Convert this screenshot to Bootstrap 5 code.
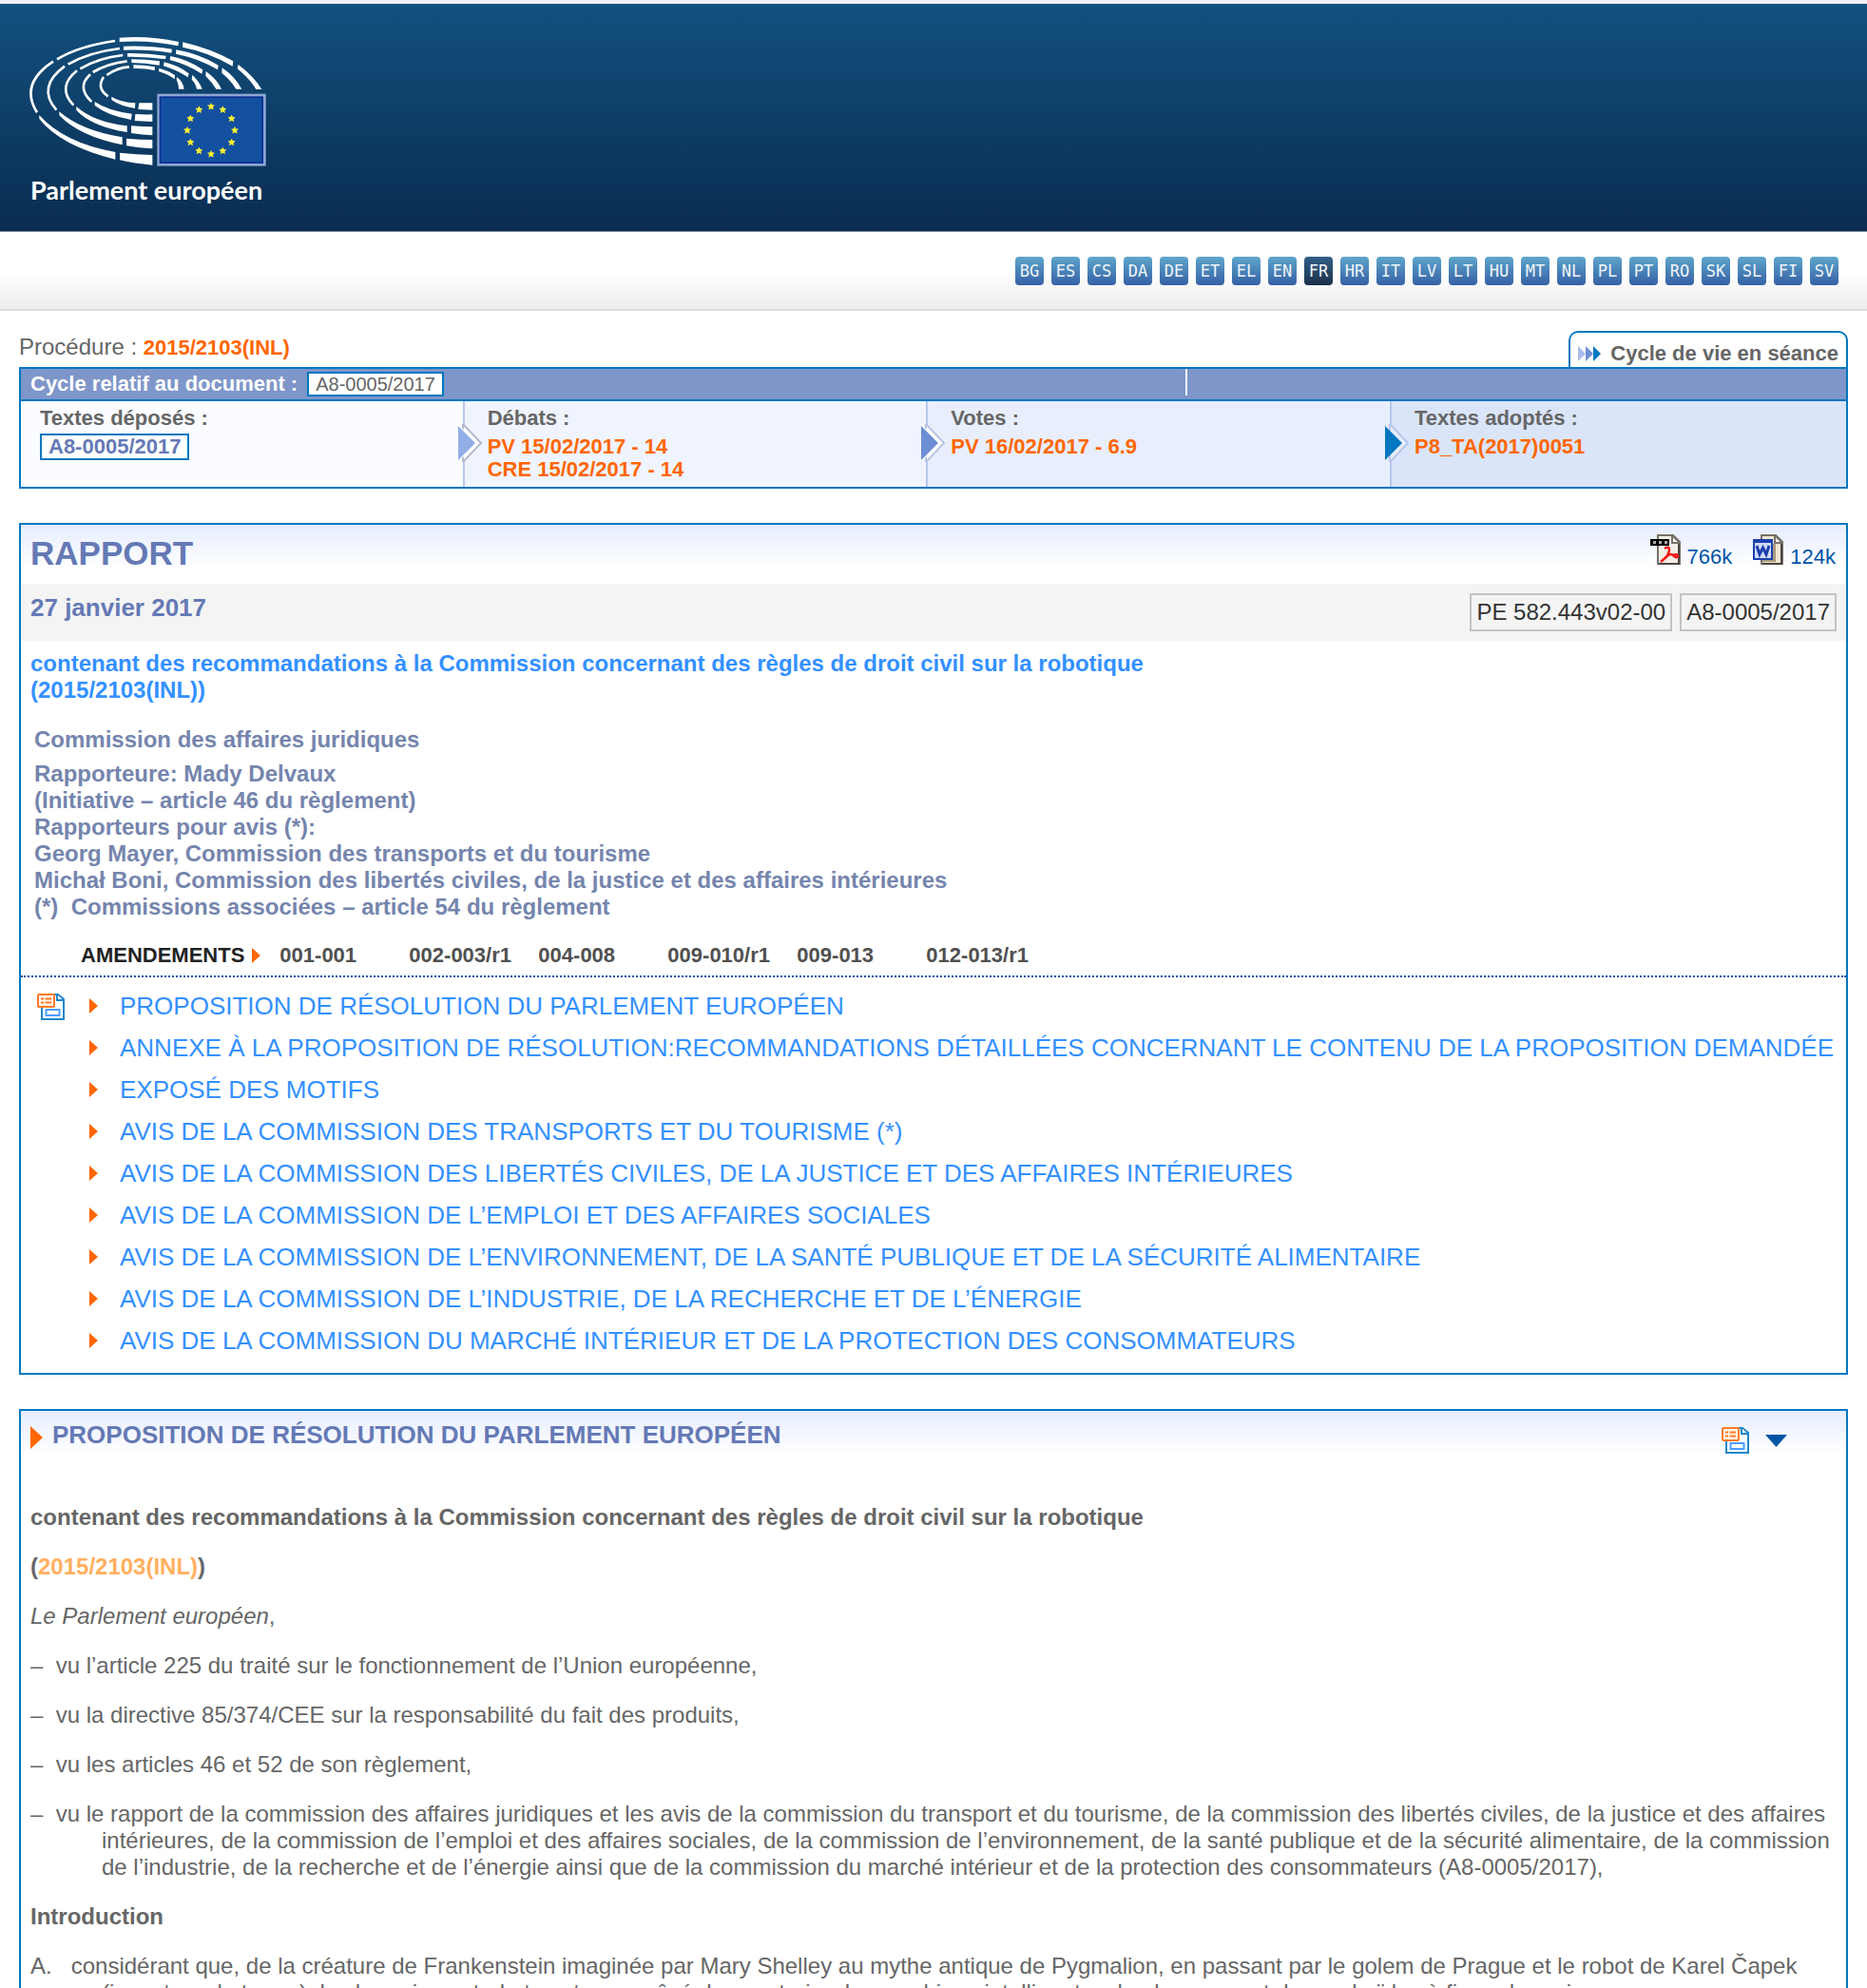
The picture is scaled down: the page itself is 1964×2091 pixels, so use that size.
<!DOCTYPE html>
<html lang="fr">
<head>
<meta charset="utf-8">
<meta name="viewport" content="width=device-width, initial-scale=1">
<title>RAPPORT contenant des recommandations à la Commission concernant des règles de droit civil sur la robotique</title>
<link href="https://cdn.jsdelivr.net/npm/bootstrap@5.3.0/dist/css/bootstrap.min.css" rel="stylesheet">
<style>
  :root { --ep-line: #0077c0; --ep-violet: #6579b5; --ep-orange: #ff6600; --ep-sky: #3390ff; }
  body { font: 24px/28px "Liberation Sans", Arial, sans-serif; color: #666; background: #fff; }
  a { text-decoration: none; color: inherit; }
  svg { display: block; flex: none; }
  .ep-top { background: linear-gradient(#13517f, #0e406a 45%, #0a2c50); border-top: 4px solid #f1f1f3; height: 244px; border-bottom: 1px solid #7c8ca0; padding: 32px 30px; }
  .ep-name { color: #fff; font: bold 27px/44px Lato, "Open Sans", sans-serif; margin-left: 2px; white-space: nowrap; }
  .ep-langs { background: linear-gradient(#fff 55%, #efefef 90%); border-bottom: 2px solid #ddd; padding: 26px 30px; height: 83px; }
  .ep-lang { width: 30px; height: 30px; border-radius: 4px; background: linear-gradient(#5ea6cc, #3660a4); color: #f0f5fa; font: 17px/30px "DejaVu Sans Mono", monospace; text-align: center; }
  .ep-lang.current { background: linear-gradient(#325f86, #1b3049); }
  .ep-main { padding: 0 20px; }
  .ep-proc { height: 59px; }
  .ep-proc p { font-size: 24px; line-height: 32px; padding-bottom: 4px; }
  .ep-proc strong, .ep-cycle { font-size: 22px; }
  .ep-orange { color: var(--ep-orange); }
  .ep-tab { border: 2px solid var(--ep-line); border-bottom: 0; border-radius: 10px 10px 0 0; height: 38px; padding: 8px 8px 0; font-size: 22px; gap: 10px; }
  .ep-cycle { border: 2px solid var(--ep-line); line-height: 24px; font-weight: bold; }
  .ep-cyclehead { background: #7e96c9; color: #fff; height: 34px; border-bottom: 2px solid var(--ep-line); padding-left: 10px; gap: 10px; }
  .ep-cyclehead .ep-half { flex: none; width: 36.4%; border-left: 2px solid #fff; height: 28px; margin-top: -4px; }
  .ep-ref { border: 2px solid var(--ep-line); background: #fff; color: #666; padding: 0 7px; font-weight: normal; font-size: 20px; line-height: 22px; }
  .ep-step { height: 90px; padding: 6px 0 0 24px; flex: 0 0 25.4%; border-left: 2px solid #b8c8ec; position: relative; }
  .ep-step:first-child { flex-basis: 24.2%; padding-left: 20px; border: 0; background: #fbfcff; }
  .ep-step:last-child { flex: 1 1 0; background: #dae5f9; }
  .ep-step p { margin-bottom: 6px; }
  .ep-step a { display: block; color: var(--ep-orange); }
  .ep-step a.ep-docref { display: inline-block; color: var(--ep-violet); border: 2px solid var(--ep-line); background: #fff; padding: 0 7px; margin-top: -2px; }
  .ep-step svg { position: absolute; left: -7px; top: 24px; }
  .ep-s2 { background: #f0f4fe; } .ep-s3 { background: #e8eefc; }
  .ep-box { border: 2px solid var(--ep-line); margin-top: 36px; background: linear-gradient(#e6edff, #fff 46px); }
  .ep-title { font-size: 35px; line-height: 40px; font-weight: bold; color: var(--ep-violet); margin: 0; }
  .ep-head { height: 62px; padding: 10px 11px 0 10px; }
  .ep-files { gap: 22px; }
  .ep-file { color: #0054a6; font-size: 22px; line-height: 26px; gap: 7px; }
  .ep-file span { padding-top: 11px; }
  .ep-date { background: #f4f4f4; height: 60px; padding: 0 10px; color: var(--ep-violet); font-size: 26px; }
  .ep-date b { margin-bottom: 10px; }
  .ep-num { border: 2px solid #c3c3c3; color: #333; font-size: 24px; line-height: 36px; padding: 0 5px; }
  .ep-subject { color: var(--ep-sky); font-weight: bold; padding: 10px; margin-bottom: 14px; }
  .ep-authors { color: #7585ad; font-weight: bold; padding-left: 14px; }
  .ep-authors p { margin-bottom: 8px; }
  .ep-amend { font-size: 22px; font-weight: bold; color: #505050; padding: 0 0 6px 63px; margin-top: 22px; border-bottom: 2px dotted #0054a6; height: 38px; }
  .ep-amend a { width: 136px; }
  .ep-amend span { color: #222; margin-right: 8px; }
  .ep-amend svg { margin-right: 20px; }
  .ep-toc { list-style: none; margin: 0; padding: 8px 0 12px; font-size: 26px; line-height: 44px; color: var(--ep-sky); flex: 1; }
  .ep-toc li { display: flex; align-items: center; }
  .ep-toc svg { margin-right: 23px; }
  .ep-sum { margin: 16px 26px 0 17px; }
  .ep-sect { padding: 10px 62px 0 10px; height: 68px; gap: 10px; }
  .ep-sect > svg, .ep-tools { margin-top: 6px; }
  .ep-tools { gap: 17px; }
  .ep-sect h2 { font-size: 26px; line-height: 30px; font-weight: bold; color: var(--ep-violet); margin: 0; flex: 1; }
  .ep-text { padding: 30px 10px; }
  .ep-text p { margin-bottom: 24px; }
  .ep-text .ep-hang { padding-left: 75px; text-indent: -75px; }
  .ep-text .ep-pale { color: #ffb060; }
</style>
<script src="https://cdn.jsdelivr.net/npm/bootstrap@5.3.0/dist/js/bootstrap.bundle.min.js"></script>
</head>
<body>
<svg width="0" height="0" class="position-absolute" aria-hidden="true">
  <symbol id="tri" viewBox="0 0 9 16"><path d="M0 0L9 8L0 16Z" fill="#ff6600"/></symbol>
  <symbol id="star" viewBox="-10 -10 20 20"><path d="M0-10L3.200-4L10-3.500L5 1.800L6.500 9L0 5.500L-6.500 9L-5 1.800L-10-3.500L-3.200-4Z" fill="#f8ef30"/></symbol>
  <symbol id="sum" viewBox="0 0 29 30">
    <path d="M5 14V28H28V7L22 2H18" fill="#fff" stroke="#1d87c8" stroke-width="2"/><path d="M21 2V8H27" fill="#fff" stroke="#1d87c8" stroke-width="2"/>
    <rect x="9.500" y="18" width="14" height="6" fill="#fff" stroke="#4d9cff" stroke-width="2"/>
    <rect x="1" y="2" width="17" height="13" rx="1" fill="#fff4e8" stroke="#ff7a2a" stroke-width="2"/>
    <path d="M4 6.500H7M8.500 6.500H15M4 10.500H7M8.500 10.500H15" stroke="#ff7a2a" stroke-width="2"/>
  </symbol>
</svg>
<div class="vh-100 overflow-hidden">
<header class="ep-top">
  <a href="#" aria-label="Parlement européen">
  <svg width="252" height="142" viewBox="90 108 756 426">
    <g fill="none" stroke="#fff" stroke-width="8">
      <path d="M363 129Q250 145 180 187M168 194Q60 265 117 355"/>
      <path d="M378 153Q280 165 215 203M204 209Q115 275 178 347"/>
      <path d="M388 174Q310 183 253 217M243 223Q178 275 232 332"/>
      <path d="M401 193Q340 200 293 228M285 235Q240 275 289 321"/>
      <path d="M408 211Q370 213 337 237M327 243Q303 278 341 304"/>
    </g>
    <g fill="#fff">
      <path d="M124 363Q200 450 364 480V503Q190 460 124 375ZM378 482Q430 488 481 489V521Q425 516 378 505ZM377 119Q470 112 564 132L562 145Q470 125 377 132ZM577 133Q670 155 736 193L734 209Q660 165 576 149ZM752 204Q800 240 826 282H808Q790 250 749 217Z"/>
      <path d="M187 352Q255 412 386 433V457Q250 430 187 364ZM399 437Q440 441 481 441V469Q440 467 399 460ZM390 146Q470 143 543 155L541 167Q470 155 390 158ZM556 157Q630 170 689 206L687 220Q630 185 555 170ZM701 214Q740 240 763 281H745Q730 255 700 230Z"/>
      <path d="M241 336Q295 385 401 397V417Q290 400 241 348ZM414 397Q450 400 481 400V427Q450 426 414 420ZM402 168Q465 167 524 176L522 187Q465 178 402 179ZM538 177Q595 188 640 220L637 233Q590 203 536 189ZM650 225Q685 250 699 281H682Q670 260 649 240Z"/>
      <path d="M299 321Q342 350 416 359L414 378Q340 365 299 333ZM427 360Q455 362 481 361V384L425 381ZM415 187Q460 187 504 193L503 206Q460 198 415 198ZM518 196Q560 205 596 232L593 244Q560 222 516 208ZM607 236Q630 258 638 281H621Q617 262 605 251Z"/>
      <path d="M352 305Q380 323 427 325L426 342Q380 335 352 315ZM439 325H481V347L436 345ZM421 205Q455 205 489 211L488 222Q455 215 421 216ZM502 215Q530 222 552 237L551 250Q530 234 501 225ZM558 243Q578 258 581 281H564Q563 262 557 253Z"/>
    </g>
    <rect x="496" y="296" width="343" height="228" fill="#8ca6d2"/><rect x="503" y="304" width="328" height="212" fill="#0a2f95"/><rect x="508" y="309" width="318" height="202" fill="#1450a0"/>
    <g>
      <use href="#star" x="654" y="324" width="24" height="24"/><use href="#star" x="691" y="334" width="24" height="24"/><use href="#star" x="719" y="362" width="24" height="24"/><use href="#star" x="729" y="399" width="24" height="24"/><use href="#star" x="719" y="437" width="24" height="24"/><use href="#star" x="691" y="464" width="24" height="24"/><use href="#star" x="654" y="474" width="24" height="24"/><use href="#star" x="616" y="464" width="24" height="24"/><use href="#star" x="589" y="437" width="24" height="24"/><use href="#star" x="579" y="399" width="24" height="24"/><use href="#star" x="589" y="362" width="24" height="24"/><use href="#star" x="616" y="334" width="24" height="24"/>
    </g>
  </svg>
  <div class="ep-name">Parlement européen</div>
  </a>
</header>
<nav class="ep-langs d-flex justify-content-end gap-2" aria-label="Langues">
  <a class="ep-lang" href="#">BG</a><a class="ep-lang" href="#">ES</a><a class="ep-lang" href="#">CS</a><a class="ep-lang" href="#">DA</a><a class="ep-lang" href="#">DE</a><a class="ep-lang" href="#">ET</a><a class="ep-lang" href="#">EL</a><a class="ep-lang" href="#">EN</a><a class="ep-lang current" href="#">FR</a><a class="ep-lang" href="#">HR</a><a class="ep-lang" href="#">IT</a><a class="ep-lang" href="#">LV</a><a class="ep-lang" href="#">LT</a><a class="ep-lang" href="#">HU</a><a class="ep-lang" href="#">MT</a><a class="ep-lang" href="#">NL</a><a class="ep-lang" href="#">PL</a><a class="ep-lang" href="#">PT</a><a class="ep-lang" href="#">RO</a><a class="ep-lang" href="#">SK</a><a class="ep-lang" href="#">SL</a><a class="ep-lang" href="#">FI</a><a class="ep-lang" href="#">SV</a>
</nav>
<main class="ep-main">
  <div class="ep-proc d-flex justify-content-between align-items-end">
    <p class="mb-0">Procédure : <a href="#" class="ep-orange"><strong>2015/2103(INL)</strong></a></p>
    <div class="ep-tab d-flex align-items-center fw-bold">
      <svg width="24" height="16" viewBox="0 0 24 16"><path d="M0 0L8 8L0 16Z" fill="#a9bce9"/><path d="M8 0L16 8L8 16Z" fill="#6f8fd6"/><path d="M16 0L24 8L16 16Z" fill="#0077c0"/></svg>
      Cycle de vie en séance
    </div>
  </div>
  <section class="ep-cycle">
    <div class="ep-cyclehead d-flex align-items-center">
      <span>Cycle relatif au document :</span><span class="ep-ref">A8-0005/2017</span>
      <span class="ep-half ms-auto"></span>
    </div>
    <div class="d-flex">
      <div class="ep-step"><p>Textes déposés :</p><a class="ep-docref" href="#">A8-0005/2017</a></div>
      <div class="ep-step ep-s2"><svg width="26" height="40" viewBox="0 0 26 40"><path d="M5 0L24 20L5 40Z" fill="#fff" stroke="#b5b9cc" stroke-width="2"/><path d="M0 0L19 20L0 40Z" fill="#fff"/><path d="M0 2L18 20L0 38Z" fill="#92aee6"/></svg><p>Débats :</p><a href="#">PV 15/02/2017 - 14</a><a href="#">CRE 15/02/2017 - 14</a></div>
      <div class="ep-step ep-s3"><svg width="26" height="40" viewBox="0 0 26 40"><path d="M5 0L24 20L5 40Z" fill="#fff" stroke="#b8c4e2" stroke-width="2"/><path d="M0 0L19 20L0 40Z" fill="#fff"/><path d="M0 2L18 20L0 38Z" fill="#6d8dd4"/></svg><p>Votes :</p><a href="#">PV 16/02/2017 - 6.9</a></div>
      <div class="ep-step"><svg width="26" height="40" viewBox="0 0 26 40"><path d="M5 0L24 20L5 40Z" fill="#e8eefc" stroke="#b8c8ec" stroke-width="2"/><path d="M0 2L18 20L0 38Z" fill="#0077c0"/></svg><p>Textes adoptés :</p><a href="#">P8_TA(2017)0051</a></div>
    </div>
  </section>

  <section class="ep-box">
    <div class="ep-head d-flex justify-content-between">
      <h1 class="ep-title">RAPPORT</h1>
      <div class="ep-files d-flex">
        <a href="#" class="ep-file d-flex"><svg width="32" height="32" viewBox="0 0 32 32"><path d="M8 1H24L31 8V31H8Z" fill="#f3eee6" stroke="#77716b" stroke-width="2"/><path d="M30 9V31H9" fill="none" stroke="#4a4540" stroke-width="2"/><path d="M23 1V9H31Z" fill="#fff" stroke="#77716b" stroke-width="2"/><path d="M0 5H20V12H0Z" fill="#000"/><path d="M3 7H6V10H3ZM9 7H12V10H9ZM15 7H18V10H15Z" fill="#aaa"/><path d="M11 29L20 21M15 15Q20 12 20 16Q20 20 16 25M19 22Q22 20 24 22Q28 26 29 23Q29 20 24 22" fill="none" stroke="#f01818" stroke-width="2.500"/></svg><span>766k</span></a>
        <a href="#" class="ep-file d-flex"><svg width="32" height="32" viewBox="0 0 32 32"><path d="M9 1H24L31 8V31H9Z" fill="#efe6d2" stroke="#77716b" stroke-width="2"/><path d="M30 9V31H10" fill="none" stroke="#4a4540" stroke-width="2"/><path d="M23 1V9H31Z" fill="#fff" stroke="#77716b" stroke-width="2"/><path d="M20 10H24V29H10V26H20Z" fill="#a99a80"/><rect x="1" y="6" width="19" height="20" fill="#cfdcf8" stroke="#1c3fae" stroke-width="2"/><rect x="1" y="6" width="19" height="3" fill="#1c3fae"/><path d="M4 12L7 21L10.500 14L14 21L17 12" fill="none" stroke="#1c3fae" stroke-width="3"/></svg><span>124k</span></a>
      </div>
    </div>
    <div class="ep-date d-flex align-items-center gap-2">
      <b class="me-auto">27 janvier 2017</b><span class="ep-num">PE 582.443v02-00</span><span class="ep-num">A8-0005/2017</span>
    </div>
    <div class="ep-subject">contenant des recommandations à la Commission concernant des règles de droit civil sur la robotique<br>(2015/2103(INL))</div>
    <div class="ep-authors">
      <p>Commission des affaires juridiques</p>
      <div>Rapporteure: Mady Delvaux<br>(Initiative – article 46 du règlement)<br>Rapporteurs pour avis (*):<br>Georg Mayer, Commission des transports et du tourisme<br>Michał Boni, Commission des libertés civiles, de la justice et des affaires intérieures<br>(*)&nbsp; Commissions associées – article 54 du règlement</div>
    </div>
    <div class="ep-amend d-flex align-items-center">
      <span>AMENDEMENTS</span><svg width="9" height="16"><use href="#tri"/></svg>
      <a href="#">001-001</a><a href="#">002-003/r1</a><a href="#">004-008</a><a href="#">009-010/r1</a><a href="#">009-013</a><a href="#">012-013/r1</a>
    </div>
    <div class="d-flex align-items-start">
      <svg class="ep-sum" width="29" height="30"><use href="#sum"/></svg>
      <ul class="ep-toc">
        <li><svg width="9" height="16"><use href="#tri"/></svg><a href="#">PROPOSITION DE RÉSOLUTION DU PARLEMENT EUROPÉEN</a></li>
        <li><svg width="9" height="16"><use href="#tri"/></svg><a href="#">ANNEXE À LA PROPOSITION DE RÉSOLUTION:RECOMMANDATIONS DÉTAILLÉES CONCERNANT LE CONTENU DE LA PROPOSITION DEMANDÉE</a></li>
        <li><svg width="9" height="16"><use href="#tri"/></svg><a href="#">EXPOSÉ DES MOTIFS</a></li>
        <li><svg width="9" height="16"><use href="#tri"/></svg><a href="#">AVIS DE LA COMMISSION DES TRANSPORTS ET DU TOURISME (*)</a></li>
        <li><svg width="9" height="16"><use href="#tri"/></svg><a href="#">AVIS DE LA COMMISSION DES LIBERTÉS CIVILES, DE LA JUSTICE ET DES AFFAIRES INTÉRIEURES</a></li>
        <li><svg width="9" height="16"><use href="#tri"/></svg><a href="#">AVIS DE LA COMMISSION DE L’EMPLOI ET DES AFFAIRES SOCIALES</a></li>
        <li><svg width="9" height="16"><use href="#tri"/></svg><a href="#">AVIS DE LA COMMISSION DE L’ENVIRONNEMENT, DE LA SANTÉ PUBLIQUE ET DE LA SÉCURITÉ ALIMENTAIRE</a></li>
        <li><svg width="9" height="16"><use href="#tri"/></svg><a href="#">AVIS DE LA COMMISSION DE L’INDUSTRIE, DE LA RECHERCHE ET DE L’ÉNERGIE</a></li>
        <li><svg width="9" height="16"><use href="#tri"/></svg><a href="#">AVIS DE LA COMMISSION DU MARCHÉ INTÉRIEUR ET DE LA PROTECTION DES CONSOMMATEURS</a></li>
      </ul>
    </div>
  </section>

  <section class="ep-box">
    <div class="ep-sect d-flex align-items-start">
      <svg width="13" height="24" viewBox="0 0 13 24"><path d="M0 0L13 12L0 24Z" fill="#ff6600"/></svg>
      <h2>PROPOSITION DE RÉSOLUTION DU PARLEMENT EUROPÉEN</h2>
      <div class="ep-tools d-flex align-items-center">
        <svg width="29" height="30"><use href="#sum"/></svg>
        <svg width="23" height="13" viewBox="0 0 23 13"><path d="M0 0H23L11.500 13Z" fill="#0054a6"/></svg>
      </div>
    </div>
    <div class="ep-text">
      <p class="fw-bold">contenant des recommandations à la Commission concernant des règles de droit civil sur la robotique</p>
      <p class="fw-bold">(<a href="#" class="ep-pale">2015/2103(INL)</a>)</p>
      <p><em>Le Parlement européen</em>,</p>
      <p class="ep-hang">–&nbsp; vu l’article 225 du traité sur le fonctionnement de l’Union européenne,</p>
      <p class="ep-hang">–&nbsp; vu la directive 85/374/CEE sur la responsabilité du fait des produits,</p>
      <p class="ep-hang">–&nbsp; vu les articles 46 et 52 de son règlement,</p>
      <p class="ep-hang">–&nbsp; vu le rapport de la commission des affaires juridiques et les avis de la commission du transport et du tourisme, de la commission des libertés civiles, de la justice et des affaires intérieures, de la commission de l’emploi et des affaires sociales, de la commission de l’environnement, de la santé publique et de la sécurité alimentaire, de la commission de l’industrie, de la recherche et de l’énergie ainsi que de la commission du marché intérieur et de la protection des consommateurs (A8-0005/2017),</p>
      <p class="fw-bold">Introduction</p>
      <p class="ep-hang">A.&nbsp;&nbsp; considérant que, de la créature de Frankenstein imaginée par Mary Shelley au mythe antique de Pygmalion, en passant par le golem de Prague et le robot de Karel Čapek (inventeur du terme), les humains ont, de tous temps, rêvé de construire des machines intelligentes, le plus souvent des androïdes à figure humaine;</p>
    </div>
  </section>
</main>
</div>
</body>
</html>
